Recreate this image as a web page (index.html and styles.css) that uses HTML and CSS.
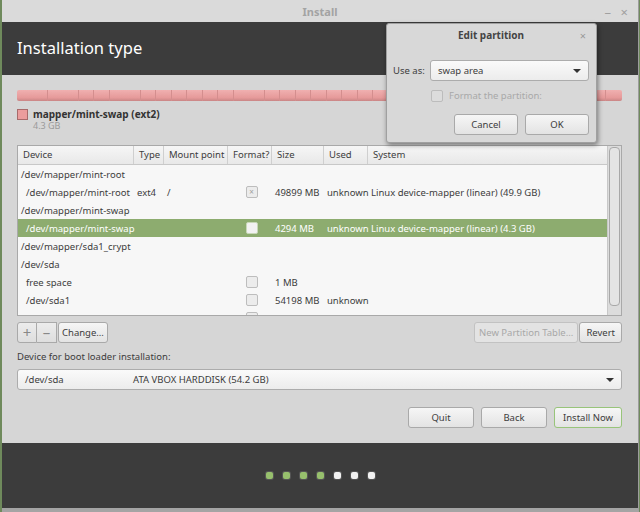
FILE: index.html
```html
<!DOCTYPE html>
<html lang="en">
<head>
  <meta charset="utf-8"/>
  <title>Install</title>
  <link rel="stylesheet" href="styles.css">
</head>
<body>

<div class="window">
  <div class="titlebar">
    <span class="title">Install</span>
    <span class="wm-btn wm-min">&#8211;</span>
    <span class="wm-btn wm-close">&#215;</span>
  </div>

  <div class="header">
    <h1>Installation type</h1>
  </div>

  <div class="content">
    <div class="partbar"></div>
    <div class="legend">
      <span class="legend-swatch"></span>
      <div>
        <div class="legend-name">mapper/mint-swap (ext2)</div>
        <div class="legend-size">4.3 GB</div>
      </div>
    </div>

    <div class="table">
      <div class="table-body">
        <div class="row head">
          <div>Device</div><div>Type</div><div>Mount point</div><div>Format?</div><div>Size</div><div>Used</div><div>System</div>
        </div>
        <div class="row group"><div>/dev/mapper/mint-root</div></div>
        <div class="row">
          <div class="child">/dev/mapper/mint-root</div><div>ext4</div><div>/</div>
          <div class="cb-cell"><span class="cb checked">&#215;</span></div>
          <div>49899 MB</div><div>unknown</div><div>Linux device-mapper (linear) (49.9 GB)</div>
        </div>
        <div class="row group"><div>/dev/mapper/mint-swap</div></div>
        <div class="row selected">
          <div class="child">/dev/mapper/mint-swap</div><div></div><div></div>
          <div class="cb-cell"><span class="cb"></span></div>
          <div>4294 MB</div><div>unknown</div><div>Linux device-mapper (linear) (4.3 GB)</div>
        </div>
        <div class="row group"><div>/dev/mapper/sda1_crypt</div></div>
        <div class="row group"><div>/dev/sda</div></div>
        <div class="row">
          <div class="child">free space</div><div></div><div></div>
          <div class="cb-cell"><span class="cb"></span></div>
          <div>1 MB</div><div></div><div></div>
        </div>
        <div class="row">
          <div class="child">/dev/sda1</div><div></div><div></div>
          <div class="cb-cell"><span class="cb"></span></div>
          <div>54198 MB</div><div>unknown</div><div></div>
        </div>
        <div class="row">
          <div class="child">free space</div><div></div><div></div>
          <div class="cb-cell"><span class="cb"></span></div>
          <div>15 MB</div><div></div><div></div>
        </div>
      </div>
      <div class="scroll">
        <div class="scroll-thumb"></div>
      </div>
    </div>

    <div class="tools">
      <div class="btn-group">
        <button class="btn tool">+</button>
        <button class="btn tool">&#8211;</button>
        <button class="btn">Change...</button>
      </div>
      <div class="btn-group">
        <button class="btn disabled">New Partition Table...</button>
        <button class="btn revert">Revert</button>
      </div>
    </div>

    <div class="boot-label">Device for boot loader installation:</div>
    <div class="combo boot-combo">
      <span class="boot-dev">/dev/sda</span>
      <span class="boot-name">ATA VBOX HARDDISK (54.2 GB)</span>
      <span class="arrow"></span>
    </div>

    <div class="actions">
      <button class="btn action">Quit</button>
      <button class="btn action">Back</button>
      <button class="btn action default">Install Now</button>
    </div>
  </div>

  <div class="footer">
    <span class="dot done"></span>
    <span class="dot done"></span>
    <span class="dot done"></span>
    <span class="dot done"></span>
    <span class="dot"></span>
    <span class="dot"></span>
    <span class="dot"></span>
  </div>
</div>

<div class="dialog">
  <div class="dialog-title">
    <span>Edit partition</span>
    <span class="dialog-close">&#215;</span>
  </div>
  <div class="dialog-row">
    <span class="dialog-label">Use as:</span>
    <div class="combo use-combo">
      <span>swap area</span>
      <span class="arrow"></span>
    </div>
  </div>
  <div class="dialog-check">
    <span class="cb off"></span>
    <span>Format the partition:</span>
  </div>
  <div class="dialog-buttons">
    <button class="btn dlg">Cancel</button>
    <button class="btn dlg">OK</button>
  </div>
</div>

</body>
</html>
```

FILE: styles.css
```css
body {
  margin: 0;
  background-color: #6f8a5c;
  font-family: 'Noto Sans', 'DejaVu Sans', sans-serif;
  font-size: 9.5px;
  color: #3c3c3c;
}

.window {
  margin-left: 2px;
  width: 637px;
  height: 512px;
  box-sizing: border-box;
  background-color: #d6d6d6;
  border-right: 1px solid #9c9c9c;
  border-bottom: 4px solid #a4a4a4;
}

.titlebar {
  height: 22px;
  position: relative;
  background-color: #dadada;
  display: flex;
  align-items: center;
  justify-content: center;
}

.title {
  color: #a3a3a3;
  font-weight: bold;
  font-size: 11px;
}

.wm-btn {
  position: absolute;
  top: 3px;
  color: #a0a0a0;
  font-size: 13px;
}

.wm-min { right: 27px; }
.wm-close { right: 10px; }

.header {
  height: 53px;
  background-color: #3c3c3c;
  display: flex;
  align-items: center;
  padding-left: 15px;
}

.header h1 {
  margin: 0 0 2px;
  color: #ffffff;
  font-weight: normal;
  font-size: 16.5px;
}

.content {
  height: 368px;
  box-sizing: border-box;
  padding: 15px 16px 0 15px;
}

.partbar {
  height: 11px;
  border-radius: 2px;
  background-color: #eba4a4;
  background-image:
    repeating-linear-gradient(90deg, transparent 0, transparent 14.5px, #d48e8e 14.5px, #d48e8e 15.5px),
    linear-gradient(#f0b0b0, #e69a9a 70%, #c98585);
}

.legend {
  display: flex;
  gap: 5px;
  margin-top: 7px;
}

.legend-swatch {
  width: 9px;
  height: 9px;
  margin-top: 1px;
  background-color: #eb9d9d;
  border: 1px solid #a86a6a;
}

.legend-name {
  font-weight: bold;
  font-size: 10px;
  color: #333;
  line-height: 13px;
}

.legend-size {
  color: #9a9a9a;
  font-size: 9px;
  line-height: 10px;
}

.table {
  margin-top: 14px;
  height: 171px;
  box-sizing: border-box;
  border: 1px solid #a9a9a9;
  background-color: #f7f7f7;
  display: flex;
  overflow: hidden;
}

.table-body {
  flex: 1;
}

.row {
  display: grid;
  grid-template-columns: 116px 30px 64px 44px 52px 44px 1fr;
  height: 18px;
  align-items: center;
  white-space: nowrap;
}

.row > div {
  padding-left: 3px;
}

.row .child {
  padding-left: 8px;
}

.row.group > div {
  grid-column: 1 / -1;
}

.row.head {
  height: 18px;
  background: linear-gradient(#f6f6f6, #e8e8e8);
  border-bottom: 1px solid #c8c8c8;
}

.row.head > div {
  height: 18px;
  line-height: 18px;
  padding-left: 5px;
  border-right: 1px solid #cfcfcf;
}

.row.head > div:last-child {
  border-right: none;
}

.row.selected {
  background-color: #8dac6f;
  color: #ffffff;
}

.cb-cell {
  display: flex;
  justify-content: center;
}

.cb {
  width: 10px;
  height: 10px;
  border: 1px solid #bdbdbd;
  border-radius: 2px;
  background-color: #ececec;
  font-size: 8px;
  line-height: 10px;
  text-align: center;
  color: #a0a0a0;
}

.row.selected .cb {
  background-color: #f2f2f2;
  border-color: #c8d8b8;
}

.scroll {
  width: 11px;
  background-color: #dcdcdc;
  border-left: 1px solid #c8c8c8;
  padding: 1px;
}

.scroll-thumb {
  height: 157px;
  border: 1px solid #a8a8a8;
  border-radius: 4px;
  background-color: #e4e4e4;
}

.tools {
  display: flex;
  justify-content: space-between;
  margin-top: 6px;
}

.btn-group {
  display: flex;
}

.btn {
  font-family: inherit;
  font-size: 9.5px;
  color: #3c3c3c;
  height: 21px;
  padding: 0 3px;
  background: linear-gradient(#f6f6f6, #e3e3e3);
  border: 1px solid #a9a9a9;
  border-radius: 3px;
  margin: 0;
}

.btn.tool {
  width: 20px;
  padding: 0;
  font-size: 15px;
  line-height: 19px;
  color: #888888;
  border-radius: 0;
  background: linear-gradient(#ececec, #dedede);
}

.btn.tool:first-child {
  border-radius: 3px 0 0 3px;
}

.btn.tool + .btn.tool {
  border-left: none;
}

.btn-group .btn + .btn:not(.tool) {
  margin-left: 1px;
}

.btn.disabled {
  color: #a8a8a8;
  background: #e3e3e3;
  border-color: #c2c2c2;
  padding: 0 4px;
}

.btn.revert {
  padding: 0 6px;
}

.boot-label {
  margin-top: 7px;
  line-height: 13px;
}

.combo {
  display: flex;
  align-items: center;
  height: 21px;
  box-sizing: border-box;
  border: 1px solid #acacac;
  border-radius: 3px;
  background: linear-gradient(#fafafa, #ececec);
  padding: 0 7px;
  position: relative;
}

.boot-combo {
  margin-top: 6px;
}

.boot-dev {
  width: 108px;
}

.arrow {
  position: absolute;
  right: 7px;
  top: 8px;
  border-left: 4px solid transparent;
  border-right: 4px solid transparent;
  border-top: 4px solid #333;
}

.actions {
  display: flex;
  justify-content: flex-end;
  gap: 7px;
  margin-top: 17px;
}

.btn.action {
  width: 66px;
}

.btn.default {
  width: 68px;
  border-color: #98c47a;
}

.footer {
  height: 65px;
  background-color: #3c3c3c;
  display: flex;
  justify-content: center;
  align-items: center;
  gap: 10px;
}

.dot {
  width: 7px;
  height: 7px;
  border-radius: 2px;
  background-color: #f2f2f2;
  box-shadow: 0 0 0 1px #555;
}

.dot.done {
  background-color: #97c06d;
}

.dialog {
  position: absolute;
  left: 386px;
  top: 23px;
  width: 211px;
  height: 120px;
  box-sizing: border-box;
  background-color: #d8d8d8;
  border: 1px solid #a0a0a0;
  border-radius: 3px;
  box-shadow: 1px 2px 5px rgba(0, 0, 0, 0.45);
  padding: 0 7px 0 6px;
}

.dialog-title {
  height: 20px;
  position: relative;
  display: flex;
  align-items: center;
  justify-content: center;
  font-weight: bold;
  font-size: 10px;
  color: #444;
  margin-top: 1px;
}

.dialog-close {
  position: absolute;
  right: 3px;
  top: 3px;
  font-weight: normal;
  color: #999;
  font-size: 11px;
}

.dialog-row {
  display: flex;
  align-items: center;
  margin-top: 15px;
}

.dialog-label {
  width: 37px;
}

.use-combo {
  flex: 1;
}

.dialog-check {
  display: flex;
  align-items: center;
  gap: 6px;
  margin-top: 8px;
  margin-left: 38px;
  color: #a8a8a8;
}

.cb.off {
  background-color: #dcdcdc;
  border-color: #bcbcbc;
}

.dialog-buttons {
  display: flex;
  justify-content: flex-end;
  gap: 7px;
  margin-top: 12px;
}

.btn.dlg {
  width: 64px;
}
```
